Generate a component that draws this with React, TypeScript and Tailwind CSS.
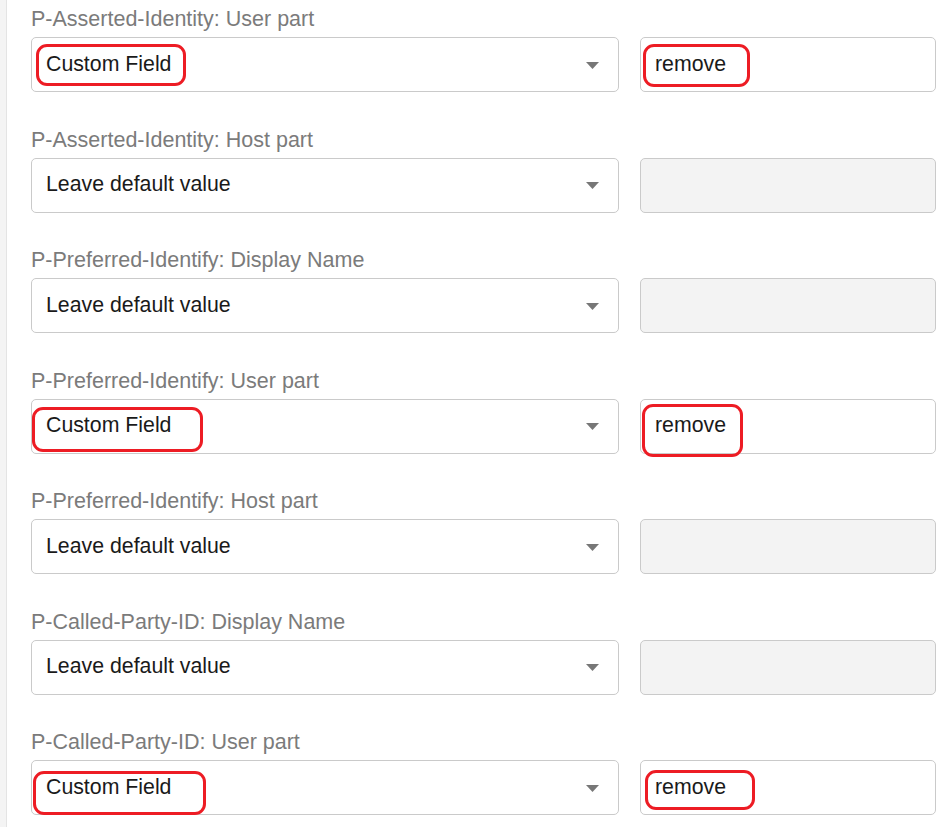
import React from 'react';

type Mark = { left: number; top: number; width: number; height: number };

type Row = {
  label: string;
  value: string;
  custom?: string;
  selectMark?: Mark;
  inputMark?: Mark;
};

const rows: Row[] = [
  {
    label: 'P-Asserted-Identity: User part',
    value: 'Custom Field',
    custom: 'remove',
    selectMark: { left: 4, top: 6, width: 150, height: 42 },
    inputMark: { left: 2, top: 6, width: 107, height: 43 },
  },
  { label: 'P-Asserted-Identity: Host part', value: 'Leave default value' },
  { label: 'P-Preferred-Identify: Display Name', value: 'Leave default value' },
  {
    label: 'P-Preferred-Identify: User part',
    value: 'Custom Field',
    custom: 'remove',
    selectMark: { left: 0, top: 7, width: 171, height: 45 },
    inputMark: { left: 1, top: 4, width: 101, height: 53 },
  },
  { label: 'P-Preferred-Identify: Host part', value: 'Leave default value' },
  { label: 'P-Called-Party-ID: Display Name', value: 'Leave default value' },
  {
    label: 'P-Called-Party-ID: User part',
    value: 'Custom Field',
    custom: 'remove',
    selectMark: { left: 1, top: 10, width: 173, height: 44 },
    inputMark: { left: 4, top: 9, width: 110, height: 40 },
  },
];

function RedMark({ m }: { m: Mark }) {
  // hand-drawn highlight from the annotated screenshot
  return (
    <div
      className="pointer-events-none absolute rounded-[11px] border-[3.5px] border-[#ed1c24]"
      style={{ left: m.left, top: m.top, width: m.width, height: m.height }}
    />
  );
}

function Field({ row }: { row: Row }) {
  const disabled = row.custom === undefined;
  return (
    <div className="mb-[28.5px]">
      <div className="pt-[7px] text-[21.5px] leading-[24px] text-[#7b7b7b] mb-[6px]">{row.label}</div>
      <div className="grid grid-cols-[588px_296px] gap-[21px]">
        <div className="relative flex h-[55px] items-center rounded-[5px] border border-[#cacaca] bg-white pl-[14px] pr-[19px]">
          <span className="flex-1 text-[21.3px] text-[#1a1a1a]">{row.value}</span>
          <svg width="13" height="7" viewBox="0 0 13 7" className="mt-[1px]">
            <path d="M0 0h13L6.5 7z" fill="#777" />
          </svg>
          {row.selectMark && <RedMark m={row.selectMark} />}
        </div>
        <div
          className={`relative flex h-[55px] items-center rounded-[5px] border border-[#cacaca] pl-[14px] ${
            disabled ? 'bg-[#f3f3f3]' : 'bg-white'
          }`}
        >
          {row.custom && <span className="text-[21.3px] text-[#1a1a1a]">{row.custom}</span>}
          {row.inputMark && <RedMark m={row.inputMark} />}
        </div>
      </div>
    </div>
  );
}

export default function App() {
  return (
    <div className="flex min-h-screen bg-white font-['Liberation_Sans',Arial,sans-serif]">
      {/* left rail */}
      <div className="w-[7px] shrink-0 border-r border-[#e4e4e4] bg-[#f4f4f4]" />
      <div className="pl-[24px]">
        {rows.map((row) => (
          <Field key={row.label} row={row} />
        ))}
      </div>
    </div>
  );
}
